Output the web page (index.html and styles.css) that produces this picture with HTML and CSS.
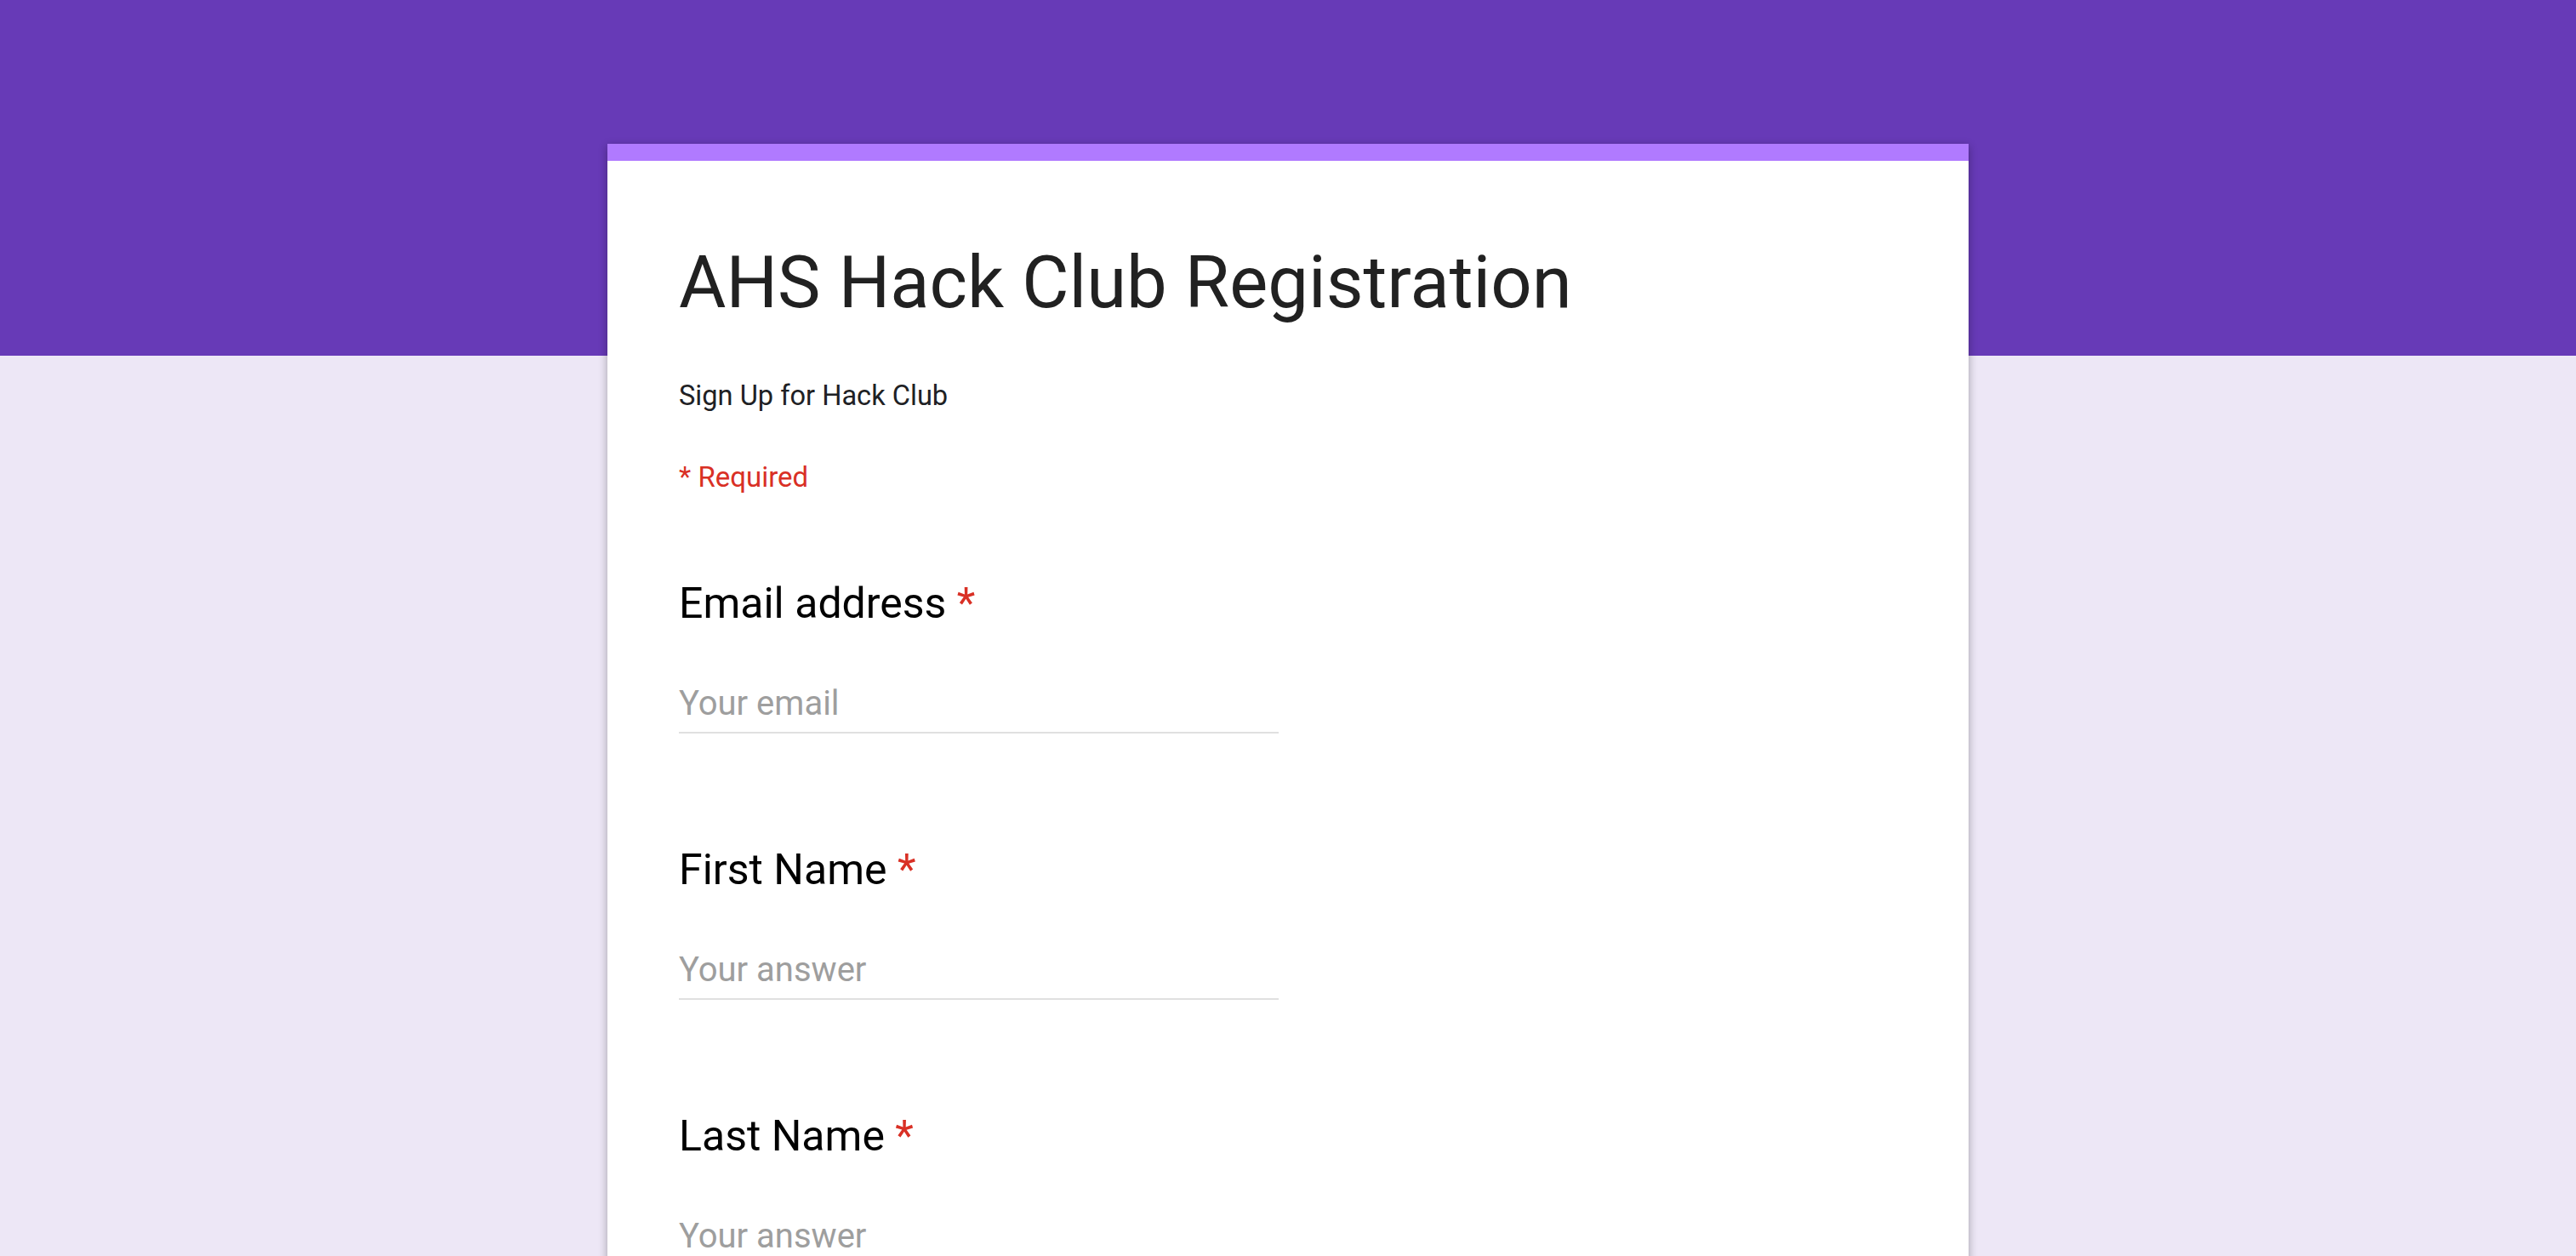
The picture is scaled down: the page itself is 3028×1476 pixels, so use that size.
FILE: index.html
```html
<!DOCTYPE html>
<html lang="en">
<head>
<meta charset="utf-8">
<title>AHS Hack Club Registration</title>
<link rel="stylesheet" href="styles.css">
</head>
<body>
<main class="page">
  <form class="card">
    <div class="card-bar"></div>
    <div class="card-body">
      <h1 class="form-title">AHS Hack Club Registration</h1>
      <p class="form-desc">Sign Up for Hack Club</p>
      <p class="form-required">* Required</p>

      <div class="question">
        <div class="q-label">Email address <span class="q-star">*</span></div>
        <div class="q-input"><span class="q-placeholder">Your email</span></div>
      </div>

      <div class="question">
        <div class="q-label">First Name <span class="q-star">*</span></div>
        <div class="q-input"><span class="q-placeholder">Your answer</span></div>
      </div>

      <div class="question">
        <div class="q-label">Last Name <span class="q-star">*</span></div>
        <div class="q-input"><span class="q-placeholder">Your answer</span></div>
      </div>
    </div>
  </form>
</main>
</body>
</html>
```

FILE: styles.css
```css
html, body {
  margin: 0;
  padding: 0;
}

body {
  font-family: Roboto, "Noto Sans", "Liberation Sans", sans-serif;
  background: linear-gradient(to bottom, #673ab7 0, #673ab7 418px, #ede7f6 418px, #ede7f6 100%);
  background-color: #ede7f6;
  min-height: 1476px;
}

.page {
  padding-top: 169px;
}

.card {
  display: block;
  width: 1600px;
  margin: 0 auto;
  background: #ffffff;
  box-shadow: 0 3px 10px rgba(0, 0, 0, 0.32);
}

.card-bar {
  height: 20px;
  background: #b07aff;
}

.card-body {
  padding: 93px 84px 120px 84px;
}

.form-title {
  margin: 0;
  font-size: 85px;
  line-height: 100px;
  font-weight: 400;
  color: #212121;
}

.form-desc {
  margin: 59px 0 0 0;
  font-size: 32.6px;
  line-height: 48px;
  color: #202124;
}

.form-required {
  margin: 48px 0 0 0;
  font-size: 33px;
  line-height: 48px;
  color: #d93025;
}

.question {
  margin-top: 92px;
}

.question + .question {
  margin-top: 128px;
}

.q-label {
  font-size: 50px;
  line-height: 64px;
  color: #000000;
}

.q-star {
  color: #d93025;
}

.q-input {
  width: 705px;
  margin-top: 61px;
  padding-bottom: 8px;
  border-bottom: 2px solid #e0e0e0;
  font-size: 40px;
  line-height: 50px;
}

.q-placeholder {
  color: #9e9e9e;
}
```
